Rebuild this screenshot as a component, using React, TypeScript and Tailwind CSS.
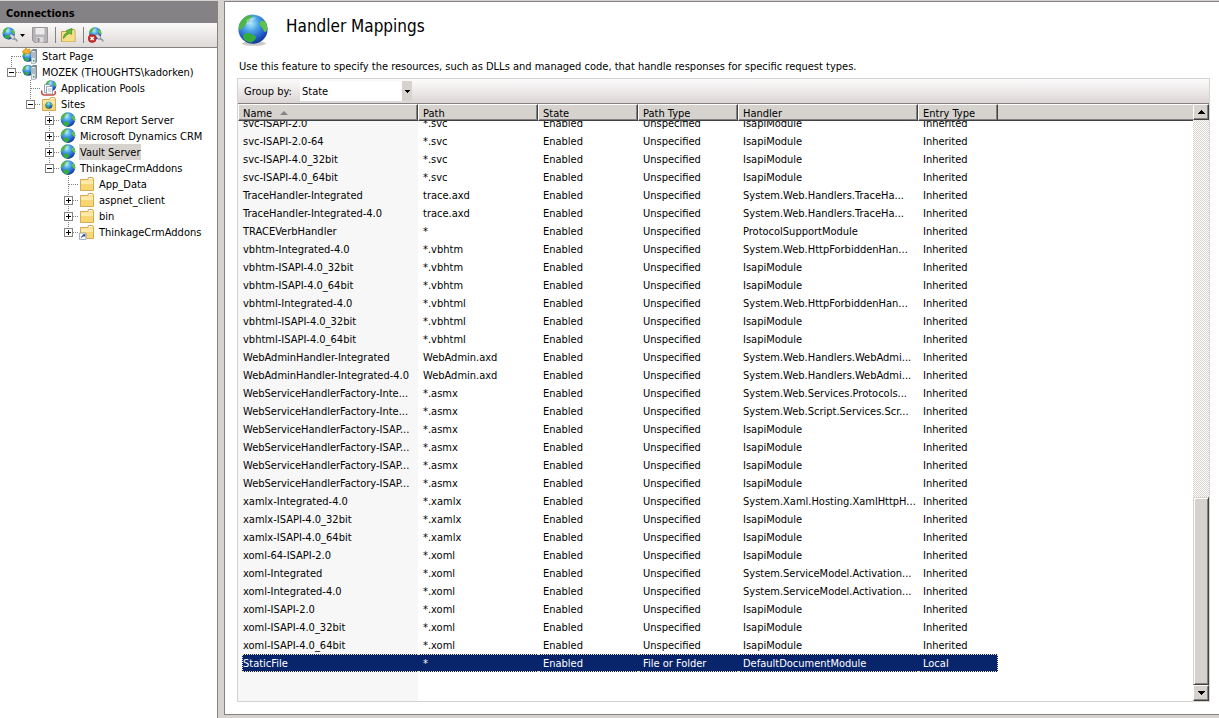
import { useEffect, useId, useRef, useState } from 'react';
import type { ReactNode } from 'react';
import clsx from 'clsx';

type IconName = 'start' | 'server' | 'pools' | 'sites' | 'globe' | 'folder' | 'vdir';

interface TreeItem {
  label: string;
  icon: IconName;
  depth: number;
  expander?: '+' | '-';
  first?: boolean;
  last?: boolean;
}

const tree: TreeItem[] = [
  { label: 'Start Page', icon: 'start', depth: 0, first: true },
  { label: 'MOZEK (THOUGHTS\\kadorken)', icon: 'server', depth: 0, expander: '-', last: true },
  { label: 'Application Pools', icon: 'pools', depth: 1 },
  { label: 'Sites', icon: 'sites', depth: 1, expander: '-', last: true },
  { label: 'CRM Report Server', icon: 'globe', depth: 2, expander: '+' },
  { label: 'Microsoft Dynamics CRM', icon: 'globe', depth: 2, expander: '+' },
  { label: 'Vault Server', icon: 'globe', depth: 2, expander: '+' },
  { label: 'ThinkageCrmAddons', icon: 'globe', depth: 2, expander: '-', last: true },
  { label: 'App_Data', icon: 'folder', depth: 3 },
  { label: 'aspnet_client', icon: 'folder', depth: 3, expander: '+' },
  { label: 'bin', icon: 'folder', depth: 3, expander: '+' },
  { label: 'ThinkageCrmAddons', icon: 'vdir', depth: 3, expander: '+', last: true },
];

const columns = ['Name', 'Path', 'State', 'Path Type', 'Handler', 'Entry Type'];

// name, path, handler
const inherited: [string, string, string][] = [
  ['svc-ISAPI-2.0', '*.svc', 'IsapiModule'],
  ['svc-ISAPI-2.0-64', '*.svc', 'IsapiModule'],
  ['svc-ISAPI-4.0_32bit', '*.svc', 'IsapiModule'],
  ['svc-ISAPI-4.0_64bit', '*.svc', 'IsapiModule'],
  ['TraceHandler-Integrated', 'trace.axd', 'System.Web.Handlers.TraceHa...'],
  ['TraceHandler-Integrated-4.0', 'trace.axd', 'System.Web.Handlers.TraceHa...'],
  ['TRACEVerbHandler', '*', 'ProtocolSupportModule'],
  ['vbhtm-Integrated-4.0', '*.vbhtm', 'System.Web.HttpForbiddenHan...'],
  ['vbhtm-ISAPI-4.0_32bit', '*.vbhtm', 'IsapiModule'],
  ['vbhtm-ISAPI-4.0_64bit', '*.vbhtm', 'IsapiModule'],
  ['vbhtml-Integrated-4.0', '*.vbhtml', 'System.Web.HttpForbiddenHan...'],
  ['vbhtml-ISAPI-4.0_32bit', '*.vbhtml', 'IsapiModule'],
  ['vbhtml-ISAPI-4.0_64bit', '*.vbhtml', 'IsapiModule'],
  ['WebAdminHandler-Integrated', 'WebAdmin.axd', 'System.Web.Handlers.WebAdmi...'],
  ['WebAdminHandler-Integrated-4.0', 'WebAdmin.axd', 'System.Web.Handlers.WebAdmi...'],
  ['WebServiceHandlerFactory-Inte...', '*.asmx', 'System.Web.Services.Protocols...'],
  ['WebServiceHandlerFactory-Inte...', '*.asmx', 'System.Web.Script.Services.Scr...'],
  ['WebServiceHandlerFactory-ISAP...', '*.asmx', 'IsapiModule'],
  ['WebServiceHandlerFactory-ISAP...', '*.asmx', 'IsapiModule'],
  ['WebServiceHandlerFactory-ISAP...', '*.asmx', 'IsapiModule'],
  ['WebServiceHandlerFactory-ISAP...', '*.asmx', 'IsapiModule'],
  ['xamlx-Integrated-4.0', '*.xamlx', 'System.Xaml.Hosting.XamlHttpH...'],
  ['xamlx-ISAPI-4.0_32bit', '*.xamlx', 'IsapiModule'],
  ['xamlx-ISAPI-4.0_64bit', '*.xamlx', 'IsapiModule'],
  ['xoml-64-ISAPI-2.0', '*.xoml', 'IsapiModule'],
  ['xoml-Integrated', '*.xoml', 'System.ServiceModel.Activation...'],
  ['xoml-Integrated-4.0', '*.xoml', 'System.ServiceModel.Activation...'],
  ['xoml-ISAPI-2.0', '*.xoml', 'IsapiModule'],
  ['xoml-ISAPI-4.0_32bit', '*.xoml', 'IsapiModule'],
  ['xoml-ISAPI-4.0_64bit', '*.xoml', 'IsapiModule'],
];

const rows = [
  ...inherited.map(([name, path, handler]) => [name, path, 'Enabled', 'Unspecified', handler, 'Inherited']),
  ['StaticFile', '*', 'Enabled', 'File or Folder', 'DefaultDocumentModule', 'Local'],
];

const rowGrid = 'grid grid-cols-[180px_120px_100px_100px_180px_80px_1fr]';

// ==================== Icons ====================

function Svg({ children, size = 16 }: { children: ReactNode; size?: 16 | 32 }) {
  return (
    <svg viewBox="0 0 16 16" className={clsx('shrink-0', size === 16 ? 'size-4' : 'size-8')} aria-hidden="true">
      {children}
    </svg>
  );
}

function Globe({ transform }: { transform?: string }) {
  const id = useId();
  return (
    <g transform={transform}>
      <defs>
        <radialGradient id={id} cx="0.42" cy="0.3" r="0.75">
          <stop offset="0" stopColor="#b4ecfb" />
          <stop offset="0.35" stopColor="#4ca5e8" />
          <stop offset="0.75" stopColor="#1f55c8" />
          <stop offset="1" stopColor="#12307f" />
        </radialGradient>
      </defs>
      <circle cx="8" cy="7.6" r="7.3" fill={`url(#${id})`} />
      <path d="M1.4 4.6C2.6 2.2 4.6.8 7 .5l.8.9-1.4 1 .2 1.2-2 .9-.7 1.6-1.6 1-.6 1.2-.9-.6c0-1 .2-2.1.6-3.1Z" fill="#4fb548" />
      <path d="M3.4 10.2c.9-.7 2.3-.9 3.5-.4l2.5 1.3c.4.7-.1 1.3-.6 2l-1.600 1.200c-1.500-.1-2.900-.7-3.900-1.800-.3-.8-.4-1.700.1-2.300Z" fill="#35ad3c" />
      <path d="M12 3.600c.8-.4 1.700-.2 2.200.3.800 1.400 1.100 2.900.9 4.500l-1 .6c-.8-.2-1-1.200-1.400-2-.6-.7-1.400-1.200-1.400-2 0-.6.2-1.100.7-1.400Z" fill="#5cc548" />
      <path d="M4.600 3.200C5.800 1.900 8 1.400 9.800 1.900 8.600 2.600 6.500 3.600 5 5.200Z" fill="#fff" opacity="0.35" />
    </g>
  );
}

function ServerTower() {
  return (
    <>
      <path d="M9 2.500 11 1h4v13l-1.500 1.500H9Z" fill="#7c8790" />
      <path d="M9.500 3h4v12h-4Z" fill="#dfe5ea" />
      <path d="M10 5h3M10 7h3M10 9h3" stroke="#77848f" strokeWidth="0.9" />
      <path d="M11 12h1.500v1.500H11Z" fill="#3aa83d" />
    </>
  );
}

function FolderShape() {
  return (
    <>
      <path d="M1.500 3.500h7l1-2h4l1 1.500v11.500h-13Z" fill="#fbe08f" stroke="#d3aa55" />
      <path d="M2 5h12v9H2Z" fill="#f7d673" />
      <path d="M2 5h12v3H2Z" fill="#fdeaa8" />
      <path d="M10 2.500h3" stroke="#fff" />
    </>
  );
}

function Icon({ name }: { name: IconName }) {
  switch (name) {
    case 'start':
      return (
        <Svg>
          <Globe transform="translate(0 2.500) scale(.76)" />
          <ServerTower />
          <path d="m0 4 4-4 1.500 1.500L8 1v4L4.500 6Z" fill="#f3b32c" stroke="#cf7d13" strokeWidth="0.6" />
        </Svg>
      );
    case 'server':
      return (
        <Svg>
          <Globe transform="translate(0 .5) scale(.76)" />
          <ServerTower />
        </Svg>
      );
    case 'pools':
      return (
        <Svg>
          <Globe transform="translate(4 0) scale(.74)" />
          <path d="M1 10.500c-1 2 0 4 2 4.500h9c2 0 3-2 2-4" fill="none" stroke="#d04a3c" strokeWidth="1.600" />
          <path d="M3.500 4.500h6v8h-6Z" fill="#f4f7fb" stroke="#7b93ad" strokeWidth="0.8" />
          <path d="M5.500 6.500h6v7.500h-6Z" fill="#fff" stroke="#7b93ad" strokeWidth="0.8" />
          <path d="M7 9h3.500M7 11h3.500" stroke="#8fa5bd" strokeWidth="0.8" />
        </Svg>
      );
    case 'sites':
      return (
        <Svg>
          <FolderShape />
          <Globe transform="translate(4 5.500) scale(.48)" />
        </Svg>
      );
    case 'globe':
      return (
        <Svg>
          <Globe />
        </Svg>
      );
    case 'folder':
      return (
        <Svg>
          <FolderShape />
        </Svg>
      );
    case 'vdir':
      return (
        <Svg>
          <FolderShape />
          <path d="M.5 9h6.500v6.500H.5Z" fill="#fff" stroke="#8c9bb0" strokeWidth="0.8" />
          <path d="M2 14.500c0-2 .8-3 2.300-3.200l-.8-1.100h2.800v2.800l-1-.7c-1.300 0-2 .7-3.300 2.200Z" fill="#23408f" />
        </Svg>
      );
  }
}

function Plug() {
  return (
    <>
      <path d="M7.500 8.500 9.500 7l3 2.500v2.500l-2 .5Z" fill="#d5dce1" stroke="#87939c" strokeWidth="0.8" />
      <path d="M11.500 11.500c2 .5 3.500 1.500 3.500 3" fill="none" stroke="#8c9aa4" strokeWidth="1.600" />
    </>
  );
}

// ==================== Connections pane ====================

function TreeGuide({ item }: { item: TreeItem }) {
  return (
    <svg viewBox="0 0 19 16" className="h-4 w-[19px] shrink-0" shapeRendering="crispEdges" aria-hidden="true">
      <g stroke="#848284" strokeDasharray="1 1">
        {!item.first && <path d="M9.500 0V8" />}
        {!item.last && <path d="M9.500 8V16" />}
        <path d="M10 8.500H19" />
      </g>
      {item.expander && (
        <>
          <path d="M5.500 4.500h8v8h-8Z" fill="#fff" stroke="#848284" />
          <path d="M7 8.500h5" stroke="#000" />
          {item.expander === '+' && <path d="M9.500 6v5" stroke="#000" />}
        </>
      )}
    </svg>
  );
}

function ConnectionTree() {
  const [selected, setSelected] = useState(6);

  return (
    <ul className="flex-1 bg-white pl-0.5">
      {tree.map((item, i) => (
        <li key={i} className="flex h-4">
          {Array.from({ length: item.depth }).map((_, d) => (
            <span key={d} className="w-[19px] shrink-0" />
          ))}
          <TreeGuide item={item} />
          <button type="button" onClick={() => setSelected(i)} className="flex items-start gap-[3px] pl-px">
            <Icon name={item.icon} />
            <span className={clsx('h-4 px-px leading-[18px] whitespace-nowrap', i === selected && 'bg-[#d6d3ce]')}>
              {item.label}
            </span>
          </button>
        </li>
      ))}
    </ul>
  );
}

function ConnectionToolbar() {
  return (
    <div className="flex h-[25px] items-center border-b border-[#848284] bg-linear-to-b from-[#fbf9f9] to-[#dedad8] pl-0.5">
      <button type="button" aria-label="Create new connection" className="flex items-center gap-0.5">
        <Svg>
          <Globe transform="scale(.84)" />
          <Plug />
        </Svg>
        <svg viewBox="0 0 5 3" className="h-[3px] w-[5px]" aria-hidden="true">
          <path d="M0 0h5L2.500 3Z" />
        </svg>
      </button>
      <button type="button" aria-label="Save connections" className="ml-[7px]">
        <Svg>
          <path d="M.5.5h15v15h-13l-2-2Z" fill="#b5b3b5" stroke="#9a989a" />
          <path d="M3.500 1h9v6.500h-9Z" fill="#eceaea" />
          <path d="M4.500 10h7v5.500h-7Z" fill="#dcdada" />
          <path d="M5.500 11h2v4h-2Z" fill="#8f8d8f" />
        </Svg>
      </button>
      <span className="ml-[7px] h-4 w-px bg-[#848284]" />
      <button type="button" aria-label="Up" className="ml-1">
        <Svg>
          <path d="M1.500 4.500h7l1-2h5l.5 1v11H1.500Z" fill="#f9e29a" stroke="#c2a04a" />
          <path d="M2.500 6h12v8.500h-12Z" fill="#f6dd88" />
          <path d="M3.500 11.500c0-3.500 1.500-5.500 4-6L6.500 3.500 12 1.500l-.5 6-1.500-1.300c-2.500.8-4.500 2.300-6.500 5.300Z" fill="#63bd36" stroke="#3b8a1f" strokeWidth="0.7" />
        </Svg>
      </button>
      <span className="ml-[7px] h-4 w-px bg-[#848284]" />
      <button type="button" aria-label="Delete connection" className="ml-1">
        <Svg>
          <Globe transform="translate(.5) scale(.84)" />
          <Plug />
          <circle cx="4.200" cy="11.500" r="4" fill="#cf2f2c" stroke="#8f1a18" strokeWidth="0.6" />
          <path d="m2.600 9.900 3.200 3.200m0-3.200-3.200 3.200" stroke="#fff" strokeWidth="1.400" />
        </Svg>
      </button>
    </div>
  );
}

// ==================== Handler list ====================

function ScrollArrow({ up }: { up?: boolean }) {
  return (
    <button
      type="button"
      aria-label={up ? 'Scroll up' : 'Scroll down'}
      className="flex h-4 w-full shrink-0 items-center justify-center border border-t-white border-r-[#424142] border-b-[#424142] border-l-white bg-[#d6d3ce] shadow-[inset_-1px_-1px_#848284]"
    >
      <svg viewBox="0 0 7 4" className="h-1 w-[7px]" shapeRendering="crispEdges" aria-hidden="true">
        <path d={up ? 'M3 0h1v1h1v1h1v1h1v1H0V3h1V2h1V1h1Z' : 'M0 0h7v1H6v1H5v1H4v1H3V3H2V2H1V1H0Z'} />
      </svg>
    </button>
  );
}

function ScrollBar() {
  return (
    <div className="flex w-4 shrink-0 flex-col">
      <ScrollArrow up />
      <div className="flex flex-1 flex-col justify-end bg-[repeating-conic-gradient(#d6d3ce_0_25%,#fff_0_50%)] bg-[length:2px_2px]">
        <div className="h-1/3 border border-t-[#d6d3ce] border-r-[#424142] border-b-[#424142] border-l-[#d6d3ce] bg-[#d6d3ce] shadow-[inset_1px_1px_#fff,inset_-1px_-1px_#848284]" />
      </div>
      <ScrollArrow />
    </div>
  );
}

function HandlerTable() {
  const body = useRef<HTMLTableSectionElement>(null);

  // keep the selected last row in view
  useEffect(() => {
    const el = body.current;
    if (el) el.scrollTop = el.scrollHeight;
  }, []);

  return (
    <div className="flex min-h-0 flex-1">
      <table className="flex min-w-0 flex-1 flex-col">
        <thead className="block shrink-0">
          <tr className={rowGrid}>
            {columns.map((col, i) => (
              <th
                key={col}
                className="flex h-[17px] items-start gap-2 border border-t-white border-r-[#424142] border-b-[#424142] border-l-white bg-[#d6d3ce] pl-1 leading-[17px] font-normal shadow-[inset_-1px_-1px_#848284]"
              >
                {col}
                {i === 0 && (
                  <svg viewBox="0 0 8 4" className="h-1 w-2 self-center" aria-hidden="true">
                    <path d="M4 0 8 4H0Z" fill="#848284" />
                  </svg>
                )}
              </th>
            ))}
            <td className="border-t border-b border-t-white border-b-[#424142] bg-[#d6d3ce] shadow-[inset_0_-1px_#848284]" />
          </tr>
        </thead>
        <tbody ref={body} className="block min-h-0 flex-1 overflow-hidden">
          {rows.map((row, r) => {
            const selected = r === rows.length - 1;
            return (
              <tr key={r} className={rowGrid}>
                {row.map((cell, c) => (
                  <td key={c} className={clsx('min-w-0', c === 0 && 'bg-[#f7f7f7] pl-1')}>
                    <div
                      className={clsx(
                        'h-[18px] border-y border-dotted leading-[18px] whitespace-nowrap',
                        c === 0 ? 'border-l' : 'pl-[5px]',
                        c === row.length - 1 && 'border-r',
                        selected ? 'border-[#f7e3b0] bg-[#08246b] text-white' : 'border-transparent',
                      )}
                    >
                      {cell}
                    </div>
                  </td>
                ))}
              </tr>
            );
          })}
          <tr className={rowGrid}>
            <td className="h-[29px] bg-[#f7f7f7]" />
          </tr>
        </tbody>
      </table>
      <ScrollBar />
    </div>
  );
}

function HandlerMappings() {
  return (
    <main className="mb-[3px] flex min-w-0 flex-1 flex-col border border-r-0 border-[#848284] bg-white pt-3 pr-[9px] pb-3 pl-3">
      <div className="flex h-8 gap-[17px]">
        <Svg size={32}>
          <ellipse cx="8.500" cy="14.800" rx="6" ry="1.100" fill="#c9c9c9" />
          <Globe />
        </Svg>
        <h1 className="text-[17px] leading-6">Handler Mappings</h1>
      </div>
      <p className="mt-3 px-0.5 leading-[18px]">
        Use this feature to specify the resources, such as DLLs and managed code, that handle responses for specific
        request types.
      </p>
      <div className="mt-0.5 flex min-h-0 flex-1 flex-col border border-[#d6d3ce]">
        <div className="flex h-[25px] shrink-0 items-center gap-2 border-b border-[#848284] bg-linear-to-b from-[#fdfbfc] to-[#dcd7d5] pl-1.5">
          <label htmlFor="group-by" className="w-12 pt-0.5 whitespace-nowrap">
            Group by:
          </label>
          <div className="relative h-5 w-28 bg-white">
            <select id="group-by" className="h-5 w-full appearance-none bg-transparent pt-0.5 pl-0.5 outline-none">
              <option>State</option>
              <option>No Grouping</option>
              <option>Path Type</option>
            </select>
            <span className="pointer-events-none absolute inset-y-0 right-0 flex w-2.5 items-center justify-center bg-[#d6d3ce]">
              <svg viewBox="0 0 5 3" className="h-[3px] w-[5px]" shapeRendering="crispEdges" aria-hidden="true">
                <path d="M0 0h5v1H4v1H3v1H2V2H1V1H0Z" />
              </svg>
            </span>
          </div>
        </div>
        <HandlerTable />
      </div>
    </main>
  );
}

export default function App() {
  return (
    <div className="flex h-screen gap-1.5 bg-[#d6d3ce] pt-px font-['DejaVu_Sans_Condensed','Tahoma',sans-serif] text-[11px] text-black">
      <aside className="flex w-[218px] shrink-0 flex-col border-r border-[#848284]">
        <h2 className="h-[22px] bg-[#848284] pl-1.5 leading-[25px] font-bold">Connections</h2>
        <ConnectionToolbar />
        <ConnectionTree />
      </aside>
      <HandlerMappings />
    </div>
  );
}
